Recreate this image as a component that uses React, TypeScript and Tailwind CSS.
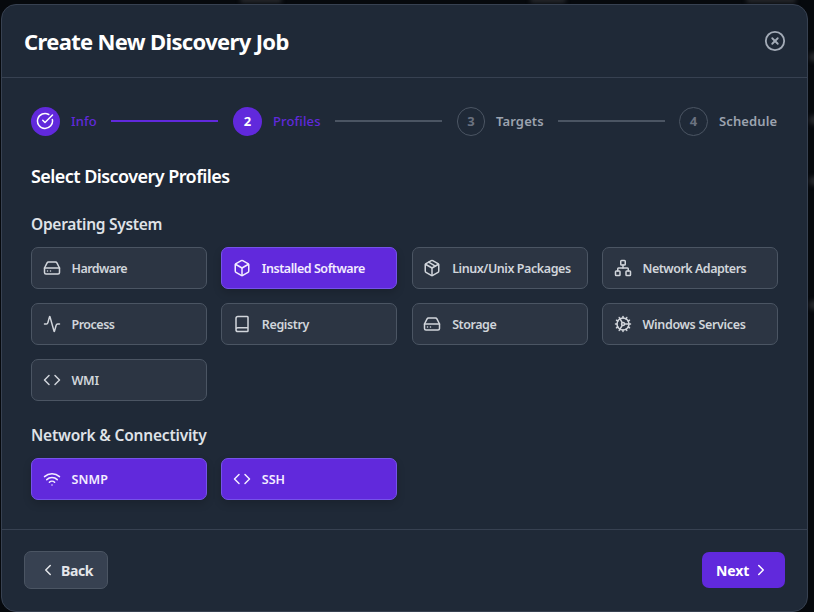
import { Fragment } from 'react';
import {
  Activity, Book, Box, ChevronLeft, ChevronRight, CircleCheckBig, CircleX,
  Code, Cog, HardDrive, Network, Package, Wifi, type LucideIcon,
} from 'lucide-react';

type Profile = { name: string; icon: LucideIcon; selected?: boolean; tracking: string };

const operatingSystem: Profile[] = [
  { name: 'Hardware', icon: HardDrive, tracking: 'tracking-[-0.55px]' },
  { name: 'Installed Software', icon: Box, selected: true, tracking: 'tracking-[-0.45px]' },
  { name: 'Linux/Unix Packages', icon: Package, tracking: 'tracking-[-0.43px]' },
  { name: 'Network Adapters', icon: Network, tracking: 'tracking-[-0.5px]' },
  { name: 'Process', icon: Activity, tracking: 'tracking-[-0.5px]' },
  { name: 'Registry', icon: Book, tracking: 'tracking-[-0.4px]' },
  { name: 'Storage', icon: HardDrive, tracking: 'tracking-[-0.45px]' },
  { name: 'Windows Services', icon: Cog, tracking: 'tracking-[-0.33px]' },
  { name: 'WMI', icon: Code, tracking: 'tracking-[-0.3px]' },
];

const connectivity: Profile[] = [
  { name: 'SNMP', icon: Wifi, selected: true, tracking: 'tracking-[0.1px]' },
  { name: 'SSH', icon: Code, selected: true, tracking: 'tracking-[0px]' },
];

const steps = [
  { label: 'Info', state: 'done', width: 'w-[26px]', circle: 'w-[29px]', line: 'ml-[14px] mr-[15px]' },
  { label: 'Profiles', state: 'active', width: 'w-[48px]', circle: 'w-[29px]', line: 'ml-[14px] mr-[15px]' },
  { label: 'Targets', state: 'todo', width: 'w-[47px]', circle: 'w-[28px]', line: 'ml-[15px] mr-[14px]' },
  { label: 'Schedule', state: 'todo', width: 'w-[59px]', circle: 'w-[29px]', line: '' },
];

// Blurred remains of the page behind the dialog.
const backdropMarks = [
  'left-[240px] top-[-3px] h-[6px] w-[42px]',
  'left-[530px] top-[-3px] h-[6px] w-[36px]',
  'left-[746px] top-[-3px] h-[6px] w-[50px]',
  'left-[809px] top-[52px] h-[10px] w-[10px]',
  'left-[809px] top-[115px] h-[10px] w-[10px]',
  'left-[809px] top-[176px] h-[10px] w-[10px]',
  'left-[809px] top-[300px] h-[10px] w-[10px]',
];

function ProfileGrid({ items }: { items: Profile[] }) {
  return (
    <div className="grid grid-cols-4 gap-x-[14.4px] gap-y-[14px]">
      {items.map(({ name, icon: Icon, selected, tracking }) => (
        <button
          key={name}
          className={`flex h-[42px] items-center gap-[10.8px] rounded-[7px] border pl-[10.7px] text-[12.5px] font-semibold whitespace-nowrap ${
            selected
              ? 'border-[#7652ea] bg-[#6129dc] text-[#f3edff] shadow-[0_4px_8px_rgba(0,0,0,0.16)]'
              : 'border-[#4b5563] bg-[#2c3543] text-[#d1d5db]'
          }`}
        >
          <Icon size={18} strokeWidth={2} className="shrink-0" />
          <span className={`pt-[2px] ${tracking}`}>{name}</span>
        </button>
      ))}
    </div>
  );
}

export default function App() {
  return (
    <div className="relative h-[612px] w-[814px] overflow-hidden bg-[#06090d] pt-[4px] pl-px font-['Noto_Sans','Open_Sans',sans-serif]">
      {backdropMarks.map((m) => (
        <span key={m} className={`absolute rounded-full bg-[#25272b] blur-[2px] ${m}`} />
      ))}
      <div className="relative flex h-[608px] w-[807px] flex-col rounded-[15px] border border-[#374151] bg-[#1f2937]">
        <header className="flex h-[73px] shrink-0 items-center justify-between border-b border-[#374151] pr-[21px] pl-[22px]">
          <h1 className="text-[22px] leading-[30px] font-bold tracking-[-0.66px] text-white">Create New Discovery Job</h1>
          <button aria-label="Close" className="text-[#a3abb7]"><CircleX size={22} strokeWidth={2} /></button>
        </header>

        <main className="flex-1 px-[29px] pt-[29px]">
          <div className="flex h-[29px] items-center">
            {steps.map((s, i) => (
              <Fragment key={s.label}>
                <span
                  className={`flex h-[29px] shrink-0 items-center justify-center rounded-full text-[13px] font-bold ${s.circle} ${
                    s.state === 'todo' ? 'border border-[#4b5563] text-[#6b7280]' : 'bg-[#6129dc] text-white'
                  }`}
                >
                  {s.state === 'done' ? <CircleCheckBig size={18} className="mr-px mb-px" /> : i + 1}
                </span>
                <span
                  className={`ml-[11px] shrink-0 text-[13px] tracking-[0.13px] whitespace-nowrap ${s.width} ${
                    s.state === 'todo' ? 'font-semibold text-[#9ca3af]' : 'font-medium text-[#6129dc]'
                  }`}
                >
                  {s.label}
                </span>
                {i < 3 && <span className={`mb-px h-[2px] flex-1 ${s.line} ${i === 0 ? 'bg-[#6129dc]' : 'bg-[#4b5563]'}`} />}
              </Fragment>
            ))}
          </div>

          <h2 className="mt-[26px] text-[18px] leading-[28px] font-semibold tracking-[-0.56px] text-white">Select Discovery Profiles</h2>
          <h3 className="mt-[22px] mb-[10px] text-[15.5px] leading-[25px] font-semibold tracking-[-0.28px] text-[#dfe2e7]">Operating System</h3>
          <ProfileGrid items={operatingSystem} />
          <h3 className="mt-[22px] mb-[10px] text-[15.5px] leading-[25px] font-semibold tracking-[-0.2px] text-[#dfe2e7]">Network &amp; Connectivity</h3>
          <ProfileGrid items={connectivity} />
        </main>

        <footer className="flex h-[82px] shrink-0 items-center justify-between border-t border-[#374151] px-[22px] pb-[2px]">
          <button className="flex h-[38px] w-[84px] items-center rounded-[7px] border border-[#4b5563] bg-[#374151] pl-[14px] text-[14px] font-bold text-[#e5e7eb]">
            <ChevronLeft size={18} />
            <span className="ml-[4px] pt-[2px] tracking-[-0.4px]">Back</span>
          </button>
          <button className="flex h-[36px] w-[83px] items-center rounded-[7px] bg-[#6129dc] pl-[14px] text-[14px] font-bold text-white">
            <span className="mr-[3px] pt-[2px] tracking-[-0.1px]">Next</span>
            <ChevronRight size={18} />
          </button>
        </footer>
      </div>
    </div>
  );
}
